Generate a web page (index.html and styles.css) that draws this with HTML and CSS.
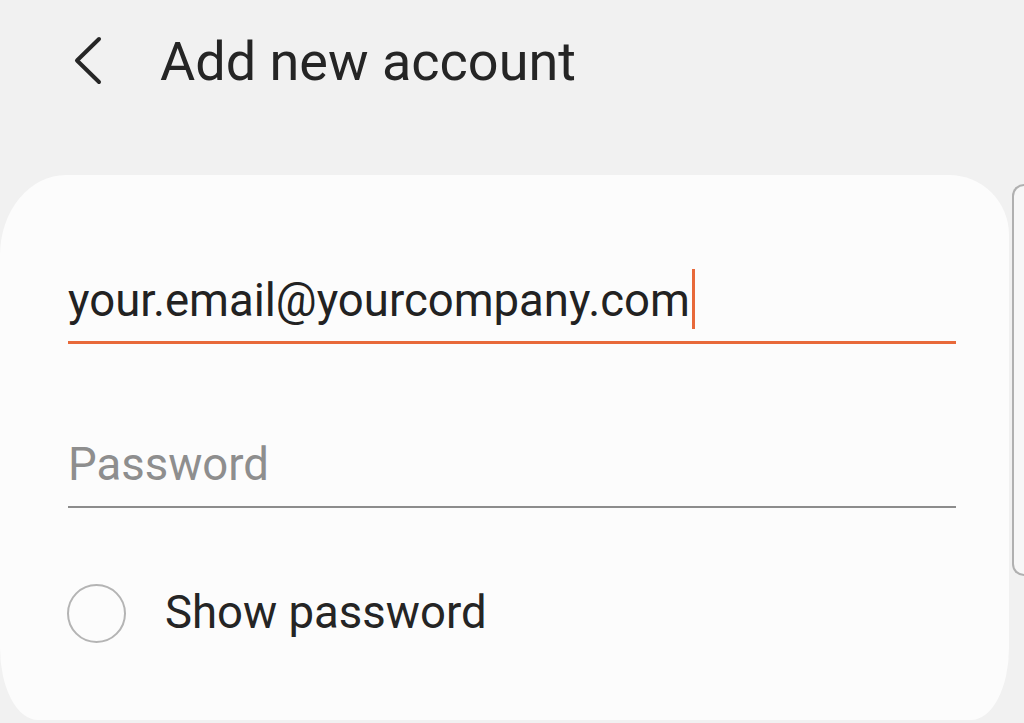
FILE: index.html
```html
<!DOCTYPE html>
<html>
<head>
<meta charset="utf-8">
<link rel="stylesheet" href="styles.css">
</head>
<body>
<div class="screen">
  <header class="appbar">
    <svg class="back" width="32" height="50" viewBox="0 0 32 50"><polyline points="27,3 5,24.5 27,46" fill="none" stroke="#262626" stroke-width="4" stroke-linecap="round" stroke-linejoin="round"/></svg>
    <h1 class="title">Add new account</h1>
  </header>
  <div class="body">
    <main class="card">
      <div class="field field-active">
        <span class="value">your.email@yourcompany.com</span><span class="caret"></span>
      </div>
      <div class="field field-idle">
        <span class="placeholder">Password</span>
      </div>
      <label class="check">
        <span class="radio"></span>
        <span class="check-label">Show password</span>
      </label>
    </main>
    <div class="scroll-track"></div>
  </div>
</div>
</body>
</html>
```
FILE: styles.css
```css
html, body {
  margin: 0;
  padding: 0;
  background: #f1f1f1;
  font-family: Roboto, "Noto Sans", sans-serif;
}
.screen {
  width: 1024px;
  height: 723px;
  overflow: hidden;
  display: flex;
  flex-direction: column;
}
.appbar {
  height: 175px;
  display: flex;
  align-items: flex-start;
  padding-top: 36px;
  box-sizing: border-box;
}
.back {
  margin-left: 72px;
  margin-top: 0;
}
.title {
  margin: -4px 0 0 56px;
  font-weight: 400;
  font-size: 54px;
  color: #252525;
  line-height: 60px;
  letter-spacing: 0;
}
.body {
  display: flex;
  align-items: flex-start;
}
.card {
  width: 1009px;
  height: 545px;
  background: #fcfcfc;
  border-radius: 66px 60px 38px 38px / 80px 60px 72px 72px;
  box-sizing: border-box;
  padding: 85px 68px 0 68px;
  display: flex;
  flex-direction: column;
}
.field {
  width: 888px;
  display: flex;
  align-items: flex-end;
  box-sizing: border-box;
}
.field-active {
  height: 84px;
  border-bottom: 3px solid #e8693a;
  padding-bottom: 10px;
}
.value {
  font-size: 45.5px;
  color: #222;
  line-height: 60px;
}
.caret {
  width: 3px;
  height: 60px;
  background: #e8693a;
  margin-left: 2px;
  margin-bottom: 2px;
}
.field-idle {
  margin-top: 80px;
  height: 84px;
  border-bottom: 2px solid #8c8c8c;
  padding-bottom: 11px;
}
.placeholder {
  font-size: 45.5px;
  color: #8e8e8e;
  line-height: 60px;
}
.check {
  margin-top: 75px;
  display: flex;
  align-items: center;
}
.radio {
  width: 59px;
  height: 59px;
  border: 2.5px solid #b4b4b4;
  border-radius: 50%;
  box-sizing: border-box;
  margin-left: -1px;
}
.check-label {
  margin-left: 39px;
  font-size: 45.5px;
  color: #252525;
  line-height: 60px;
}
.scroll-track {
  margin-left: 3px;
  margin-top: 9px;
  width: 14px;
  height: 392px;
  border: 2px solid #b0b0b0;
  border-right: none;
  border-radius: 12px 0 0 12px;
  box-sizing: border-box;
  background: #f7f7f7;
}
```
